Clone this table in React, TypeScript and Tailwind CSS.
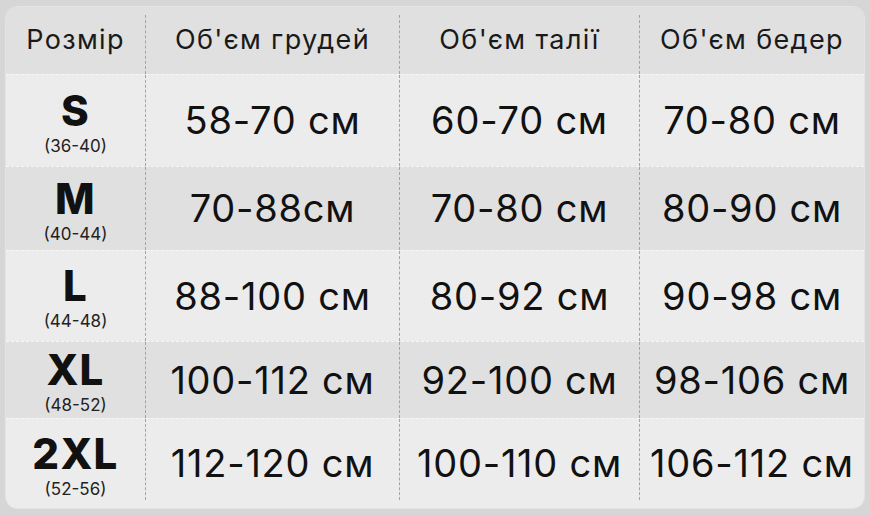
const rows = [
  { size: 'S', range: '(36-40)', chest: '58-70 см', waist: '60-70 см', hips: '70-80 см', h: 'h-[92px]', bg: 'bg-[#ececec]' },
  { size: 'M', range: '(40-44)', chest: '70-88см', waist: '70-80 см', hips: '80-90 см', h: 'h-[84px]', bg: 'bg-[#e0e0e0]' },
  { size: 'L', range: '(44-48)', chest: '88-100 см', waist: '80-92 см', hips: '90-98 см', h: 'h-[91px]', bg: 'bg-[#ececec]' },
  { size: 'XL', range: '(48-52)', chest: '100-112 см', waist: '92-100 см', hips: '98-106 см', h: 'h-[77px]', bg: 'bg-[#e0e0e0]' },
  { size: '2XL', range: '(52-56)', chest: '112-120 см', waist: '100-110 см', hips: '106-112 см', h: 'h-[90px]', bg: 'bg-[#ececec]' },
];

function Divider({ top, bottom }: { top?: boolean; bottom?: boolean }) {
  return (
    <div
      className={`w-0 self-stretch border-l border-dashed border-[#a3a3a3] ${top ? 'mt-2' : ''} ${bottom ? 'mb-2' : ''}`}
    />
  );
}

export default function App() {
  return (
    <div
      className="w-[870px] h-[515px] bg-[#d6d6d6] pt-[6px] pl-[5px] pr-[5px]"
      style={{ fontFamily: 'Inter, "Noto Sans", sans-serif' }}
    >
      <div className="w-[860px] rounded-[12px] overflow-hidden border border-[#e4e4e4] text-[#111]">
        {/* header */}
        <div className="flex h-[67px] bg-[#e0e0e0] text-[27px] tracking-[0.05em] text-[#1a1a1a]">
          <div className="w-[139px] flex items-center justify-center">Розмір</div>
          <Divider top />
          <div className="w-[253px] flex items-center justify-center">Об'єм грудей</div>
          <Divider top />
          <div className="w-[239px] flex items-center justify-center">Об'єм талії</div>
          <Divider top />
          <div className="flex-1 flex items-center justify-center">Об'єм бедер</div>
        </div>

        {rows.map((r, i) => {
          const last = i === rows.length - 1;
          return (
            <div key={r.size} className={`flex ${r.h} ${r.bg} border-t border-dashed border-[#f6f6f6]`}>
              <div className="w-[139px] flex flex-col items-center justify-center">
                <span className="text-[42px] font-extrabold tracking-[0.03em] leading-[50px]">{r.size}</span>
                <span className="text-[17px] leading-[20px] text-[#222]">{r.range}</span>
              </div>
              <Divider bottom={last} />
              <div className="w-[253px] flex items-center justify-center text-[38px] tracking-[0.02em]">{r.chest}</div>
              <Divider bottom={last} />
              <div className="w-[239px] flex items-center justify-center text-[38px] tracking-[0.02em]">{r.waist}</div>
              <Divider bottom={last} />
              <div className="flex-1 flex items-center justify-center text-[38px] tracking-[0.02em]">{r.hips}</div>
            </div>
          );
        })}
      </div>
    </div>
  );
}
